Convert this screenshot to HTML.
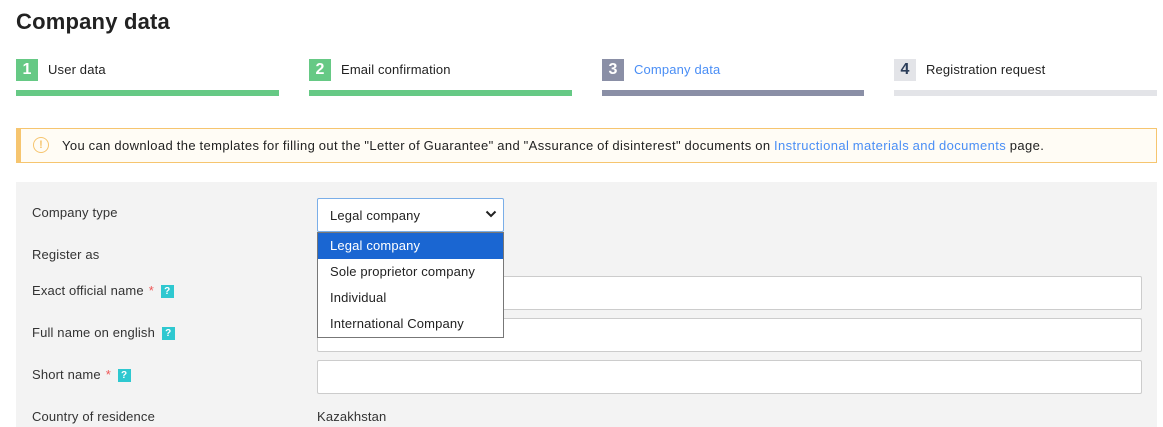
<!DOCTYPE html>
<html><head><style>
body{margin:0;width:1163px;height:427px;overflow:hidden;background:#fff;font-family:"Liberation Sans",sans-serif;color:#222;font-size:13px;position:relative;letter-spacing:0.15px}
.a{position:absolute}
h1{position:absolute;left:16px;top:9px;margin:0;font-size:22px;font-weight:bold;color:#222;letter-spacing:0.2px}
.num{position:absolute;width:22px;height:22px;color:#fff;font-weight:bold;font-size:16px;text-align:center;line-height:21px}
.st{position:absolute;top:62px;font-size:13px}
.bar{position:absolute;top:90px;height:6px}
.lbl{position:absolute;left:32px;font-size:13px;color:#333}
.q{display:inline-block;width:13px;height:13px;background:#2ec8d0;color:#fff;font-size:10px;font-weight:bold;text-align:center;line-height:13px;vertical-align:1px;margin-left:3px}
.star{color:#e55;margin-left:5px}
.inp{position:absolute;left:317px;width:823px;height:32px;background:#fff;border:1px solid #ccc;border-radius:2px}
.opt{height:26px;line-height:26px;padding-left:12px}
</style></head><body>
<h1>Company data</h1>
<div class="num" style="left:16px;top:59px;background:#66c985">1</div><div class="st" style="left:48px">User data</div>
<div class="bar" style="left:16px;width:263px;background:#66c985"></div>
<div class="num" style="left:309px;top:59px;background:#66c985">2</div><div class="st" style="left:341px">Email confirmation</div>
<div class="bar" style="left:309px;width:263px;background:#66c985"></div>
<div class="num" style="left:602px;top:59px;background:#8a8fa6">3</div><div class="st" style="left:634px;color:#4a8ef5">Company data</div>
<div class="bar" style="left:602px;width:262px;background:#8a8fa6"></div>
<div class="num" style="left:894px;top:59px;background:#e3e4e8;color:#2c3e5a">4</div><div class="st" style="left:926px">Registration request</div>
<div class="bar" style="left:894px;width:263px;background:#e3e4e8"></div>

<div class="a" style="left:16px;top:128px;height:33px;background:#fffcf5;border:1px solid #f6c56f;border-left:5px solid #f6c56f;width:1135px"></div>
<div class="a" style="left:33px;top:137px;width:14px;height:14px;border:1.5px solid #f6c56f;border-radius:50%;color:#f6c56f;font-size:11px;font-weight:bold;text-align:center;line-height:14px">!</div>
<div class="a" style="left:62px;top:138px;letter-spacing:0.4px;word-spacing:-0.5px">You can download the templates for filling out the "Letter of Guarantee" and "Assurance of disinterest" documents on <span style="color:#4a8ef5">Instructional materials and documents</span> page.</div>

<div class="a" style="left:16px;top:182px;width:1141px;height:245px;background:#f3f3f3"></div>
<div class="lbl" style="top:205px">Company type</div>
<div class="lbl" style="top:247px">Register as</div>
<div class="lbl" style="top:283px">Exact official name<span class="star">*</span> <span class="q">?</span></div>
<div class="lbl" style="top:325px">Full name on english <span class="q">?</span></div>
<div class="lbl" style="top:367px">Short name<span class="star">*</span> <span class="q">?</span></div>
<div class="lbl" style="top:409px">Country of residence</div>
<div class="a" style="left:317px;top:409px;color:#333">Kazakhstan</div>
<div class="inp" style="top:276px"></div>
<div class="inp" style="top:318px"></div>
<div class="inp" style="top:360px"></div>
<div class="a" style="left:317px;top:198px;width:185px;height:32px;background:#fff;border:1px solid #7aaee8;border-radius:2px"></div>
<div class="a" style="left:330px;top:208px">Legal company</div>
<svg class="a" style="left:485px;top:209px" width="12" height="10"><path d="M1.5 2.5 L6 7 L10.5 2.5" stroke="#222" stroke-width="2" fill="none"/></svg>
<div class="a" style="left:317px;top:232px;width:185px;height:104px;background:#fff;border:1px solid #777">
<div class="opt" style="background:#1a66d2;color:#fff">Legal company</div>
<div class="opt">Sole proprietor company</div>
<div class="opt">Individual</div>
<div class="opt">International Company</div>
</div>
</body></html>
